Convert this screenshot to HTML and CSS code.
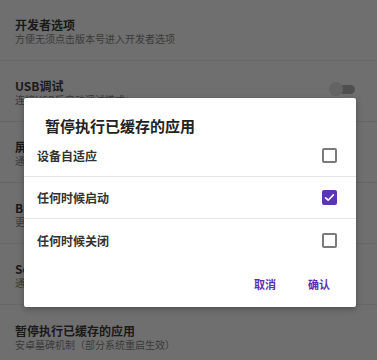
FILE: index.html
```html
<!DOCTYPE html>
<html>
<head>
<meta charset="utf-8">
<link rel="stylesheet" href="styles.css">
</head>
<body>
<div class="page">
  <div class="item">
    <div class="texts">
      <div class="title">开发者选项</div>
      <div class="sub">方便无须点击版本号进入开发者选项</div>
    </div>
  </div>
  <div class="item">
    <div class="texts">
      <div class="title">USB调试</div>
      <div class="sub">连接USB后启动调试模式：</div>
    </div>
    <div class="toggle"><span class="track"></span><span class="thumb"></span></div>
  </div>
  <div class="item">
    <div class="texts">
      <div class="title">屏幕常亮</div>
      <div class="sub">通过充电时保持屏幕常亮</div>
    </div>
  </div>
  <div class="item">
    <div class="texts">
      <div class="title">Bugreport</div>
      <div class="sub">更多错误报告选项</div>
    </div>
  </div>
  <div class="item">
    <div class="texts">
      <div class="title">Selinux</div>
      <div class="sub">通过切换安全模式</div>
    </div>
  </div>
  <div class="item last">
    <div class="texts">
      <div class="title">暂停执行已缓存的应用</div>
      <div class="sub">安卓墓碑机制（部分系统重启生效）</div>
    </div>
  </div>
</div>

<div class="dialog">
  <div class="dlg-title">暂停执行已缓存的应用</div>
  <div class="opts">
    <div class="opt"><span class="opt-text">设备自适应</span><span class="cb"></span></div>
    <div class="opt"><span class="opt-text">任何时候启动</span><span class="cb on"><svg viewBox="0 0 15 15" width="15" height="15"><path d="M3.6 7.8 L6.2 10.2 L11.4 4.9" fill="none" stroke="#fff" stroke-width="1.6" stroke-linecap="round" stroke-linejoin="round"/></svg></span></div>
    <div class="opt nob"><span class="opt-text">任何时候关闭</span><span class="cb"></span></div>
  </div>
  <div class="actions">
    <span class="btn">取消</span>
    <span class="btn">确认</span>
  </div>
</div>
</body>
</html>
```
FILE: styles.css
```css
html, body {
  margin: 0;
  padding: 0;
}
body {
  width: 377px;
  height: 360px;
  overflow: hidden;
  background: #6f6f6f;
  font-family: "Noto Sans CJK SC", "Noto Sans", sans-serif;
  position: relative;
}
.page {
  display: flex;
  flex-direction: column;
}
.item {
  height: 61px;
  box-sizing: border-box;
  border-bottom: 1px solid #666666;
  display: flex;
  align-items: center;
  padding: 0 21px 0 15px;
}
.item.last {
  border-bottom: none;
}
.texts {
  flex: 1;
  display: flex;
  flex-direction: column;
  padding-top: 3px;
}
.title {
  font-size: 12px;
  line-height: 15px;
  color: #1a1a1a;
  font-weight: 700;
}
.sub {
  font-size: 10px;
  line-height: 14px;
  color: #3a3a3a;
  margin-top: 0px;
}
.toggle {
  position: relative;
  width: 27px;
  height: 14px;
  margin-top: -5px;
}
.track {
  position: absolute;
  left: 10px;
  top: 3px;
  width: 16px;
  height: 9px;
  border-radius: 5px;
  background: #4f4f4f;
}
.thumb {
  position: absolute;
  left: 0;
  top: 0;
  width: 14px;
  height: 14px;
  border-radius: 50%;
  background: #646464;
}
.dialog {
  position: absolute;
  left: 24px;
  top: 98px;
  width: 332px;
  height: 209px;
  background: #ffffff;
  border-radius: 2px;
  box-shadow: 0 2px 6px rgba(0,0,0,0.3);
  display: flex;
  flex-direction: column;
}
.dlg-title {
  padding: 18px 0 0 21px;
  font-size: 15px;
  line-height: 19px;
  font-weight: 700;
  color: #222;
}
.opts {
  display: flex;
  flex-direction: column;
}
.opt {
  height: 42px;
  box-sizing: border-box;
  border-bottom: 1px solid #e6e6e6;
  display: flex;
  align-items: center;
  justify-content: space-between;
  padding: 0 19px 0 13px;
}
.opt.nob {
  border-bottom: none;
}
.opt-text {
  font-size: 12px;
  font-weight: 700;
  color: #333;
}
.cb {
  width: 15px;
  height: 15px;
  box-sizing: border-box;
  border: 2px solid #7a7a7a;
  border-radius: 2px;
  display: flex;
  align-items: center;
  justify-content: center;
}
.cb.on {
  border: none;
  background: #5a36b6;
}
.actions {
  flex: 1;
  display: flex;
  justify-content: flex-end;
  align-items: center;
  gap: 32px;
  padding-right: 26px;
}
.btn {
  font-size: 11px;
  font-weight: 700;
  color: #5b2fb0;
  line-height: 16px;
}
```
